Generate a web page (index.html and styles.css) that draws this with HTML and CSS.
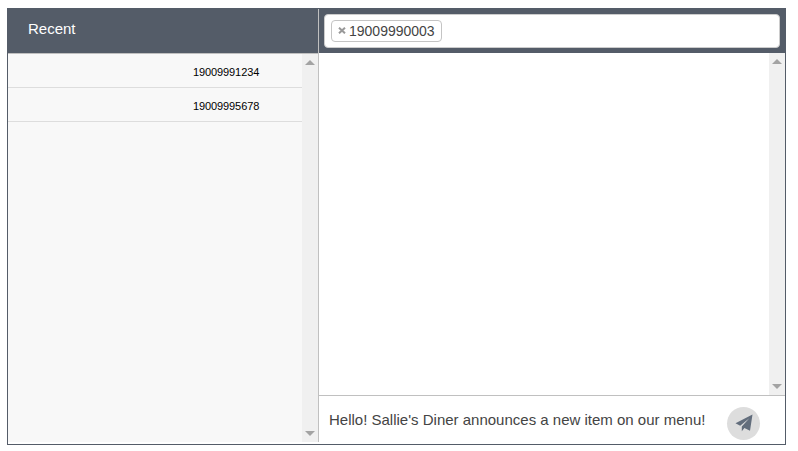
FILE: index.html
```html
<!DOCTYPE html>
<html>
<head>
    <meta charset="utf-8">
    <title>Messages</title>
    <link rel="stylesheet" href="styles.css">
</head>
<body>
<div class="messenger">
    <div class="sidebar">
        <div class="sidebar-header">Recent</div>
        <div class="sidebar-body">
            <div class="recent-list">
                <div class="recent-item">19009991234</div>
                <div class="recent-item">19009995678</div>
            </div>
            <div class="scrollbar">
                <div class="arrow-up"></div>
                <div class="arrow-down"></div>
            </div>
        </div>
    </div>
    <div class="conversation">
        <div class="conversation-header">
            <div class="recipients">
                <div class="tag"><svg class="tag-remove" viewBox="0 0 8 7"><path d="M1 .7L7 6.300M7 .7L1 6.300"/></svg>19009990003</div>
            </div>
        </div>
        <div class="conversation-body">
            <div class="messages"></div>
            <div class="scrollbar">
                <div class="arrow-up"></div>
                <div class="arrow-down"></div>
            </div>
        </div>
        <div class="composer">
            <div class="message-text">Hello! Sallie's Diner announces a new item on our menu!</div>
            <div class="send-button">
                <svg class="send-icon" viewBox="0 0 18 18"><path d="M17.500 .5L.5 9.300L5.200 11.700L14.300 4.300L6.800 12.600V17.300L9.400 14.100L15 16.800Z"/></svg>
            </div>
        </div>
    </div>
</div>
</body>
</html>
```

FILE: styles.css
```css
body {
    margin: 8px 12px 0 7px;
    font-family: "Liberation Sans", Arial, sans-serif;
    font-size: 15px;
    color: #444;
    background: #fff;
}

.messenger {
    display: flex;
    box-sizing: border-box;
    width: 779px;
    height: 437px;
    border: 1px solid #545c68;
}

.sidebar {
    display: flex;
    flex-direction: column;
    box-sizing: border-box;
    width: 311px;
    height: 433px;
    border-right: 1px solid #c0c0c0;
}

.sidebar-header {
    box-sizing: border-box;
    height: 45px;
    padding-left: 20px;
    line-height: 40px;
    color: #fff;
    background: #545c68;
    border-bottom: 1px solid #c0c0c0;
}

.sidebar-body {
    display: flex;
    flex: 1;
    background: #f8f8f8;
}

.recent-list {
    flex: 1;
}

.recent-item {
    box-sizing: border-box;
    height: 34px;
    padding-left: 185px;
    font-size: 11px;
    letter-spacing: -0.1px;
    line-height: 36px;
    color: #000;
    border-bottom: 1px solid #ddd;
}

.scrollbar {
    display: flex;
    flex-direction: column;
    justify-content: space-between;
    align-items: center;
    box-sizing: border-box;
    width: 16px;
    padding: 6px 0;
    background: #f0f0f0;
}

.arrow-up,
.arrow-down {
    width: 10px;
    height: 5px;
    background: #a3a3a3;
    clip-path: polygon(50% 0, 100% 100%, 0 100%);
}

.arrow-down {
    clip-path: polygon(0 0, 100% 0, 50% 100%);
}

.conversation {
    display: flex;
    flex: 1;
    flex-direction: column;
}

.conversation-header {
    box-sizing: border-box;
    height: 44px;
    padding: 5px;
    background: #545c68;
}

.recipients {
    display: flex;
    align-items: center;
    box-sizing: border-box;
    height: 34px;
    padding: 0 6px;
    background: #fff;
    border: 1px solid #ccc;
    border-radius: 4px;
}

.tag {
    display: flex;
    align-items: center;
    box-sizing: border-box;
    width: 111px;
    height: 22px;
    padding-left: 6px;
    font-size: 14px;
    border: 1px solid #c4c4c4;
    border-radius: 4px;
}

.tag-remove {
    width: 8px;
    height: 7px;
    margin: 0 3px 1px 0;
    fill: none;
    stroke: #999;
    stroke-width: 2;
}

.conversation-body {
    display: flex;
    flex: 1;
}

.messages {
    flex: 1;
}

.composer {
    display: flex;
    justify-content: space-between;
    box-sizing: border-box;
    height: 49px;
    padding: 11px 25px 0 10px;
    border-top: 1px solid #c0c0c0;
}

.message-text {
    line-height: 26px;
}

.send-button {
    display: flex;
    align-items: center;
    justify-content: center;
    width: 33px;
    height: 33px;
    background: #ddd;
    border-radius: 50%;
}

.send-icon {
    width: 18px;
    height: 18px;
    margin-bottom: 2px;
    fill: #626d7c;
}
```
